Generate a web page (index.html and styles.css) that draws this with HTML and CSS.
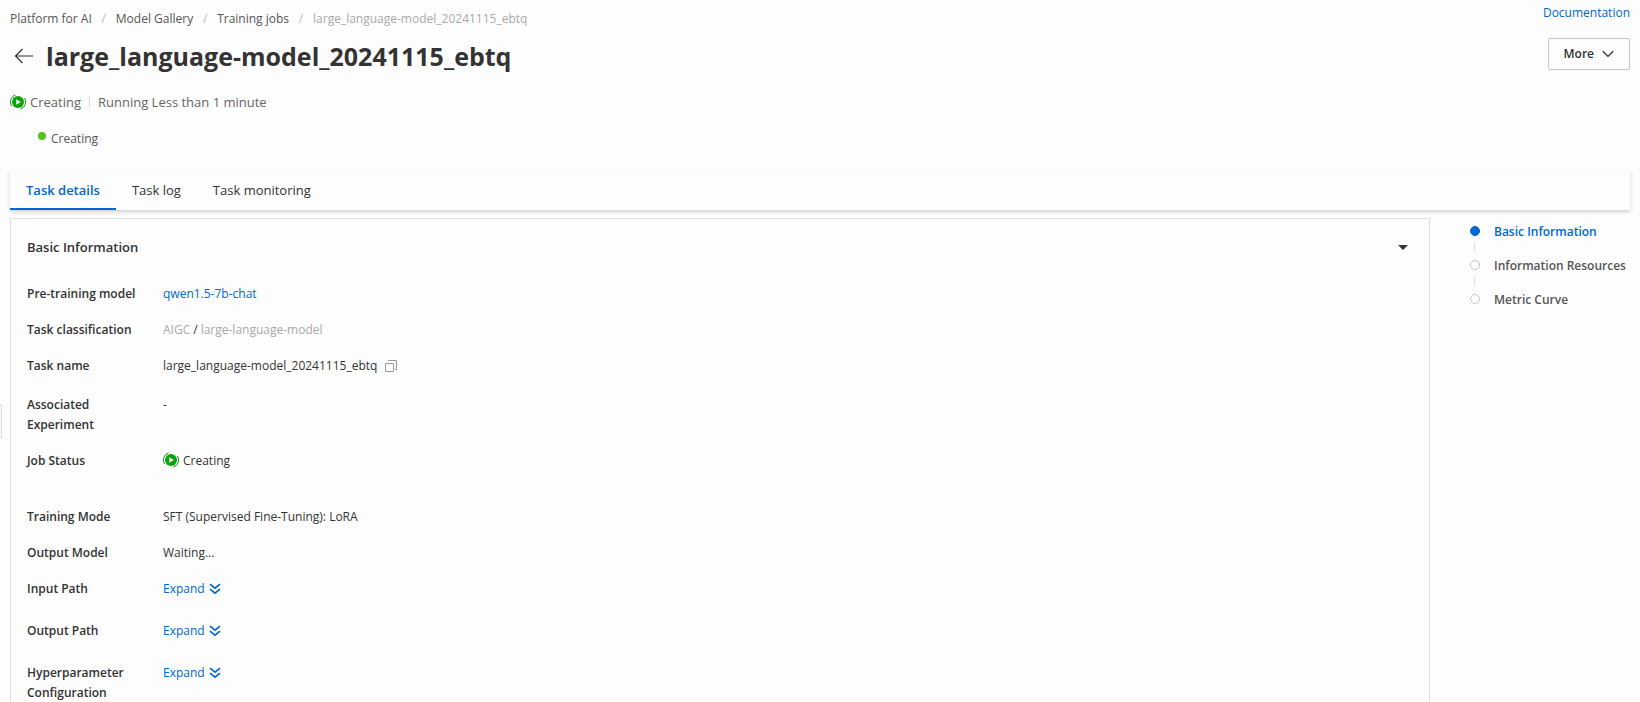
FILE: index.html
```html
<!DOCTYPE html>
<html lang="en">
<head>
<meta charset="utf-8">
<meta name="viewport" content="width=device-width, initial-scale=1">
<title>large_language-model_20241115_ebtq</title>
<link rel="stylesheet" href="styles.css">
</head>
<body>
<svg class="sprite" aria-hidden="true">
  <symbol id="running" viewBox="0 0 16 16">
    <circle cx="8" cy="8" r="6" fill="#0aa30a"/>
    <path d="M5.500 .9A7.500 7.500 0 0 0 1.500 12M10.500 15.100A7.500 7.500 0 0 0 14.500 4" fill="none" stroke="#0aa30a" stroke-width="1"/>
    <path d="M6.3 5.2v5.6l4.5-2.8z" fill="#fff"/>
  </symbol>
  <symbol id="expand" viewBox="0 0 12 12">
    <path d="M1 1.200l5 4 5-4M1 6.200l5 4 5-4" fill="none" stroke="currentColor" stroke-width="1.700"/>
  </symbol>
</svg>
<button class="side-handle" type="button" aria-label="Open sidebar"></button>
<div class="page">
  <header class="top">
    <div class="top-main">
      <nav class="crumbs" aria-label="Breadcrumb">
        <a href="#">Platform for AI</a><span class="sep">/</span>
        <a href="#">Model Gallery</a><span class="sep">/</span>
        <a href="#">Training jobs</a><span class="sep">/</span>
        <span class="current">large_language-model_20241115_ebtq</span>
      </nav>
      <div class="heading">
        <button class="back" type="button" aria-label="Back">
          <svg width="20" height="16" viewBox="0 0 20 16"><path d="M19 8H1.5M8.500 1L1.500 8l7 7" fill="none" stroke="#333" stroke-width="1.2"/></svg>
        </button>
        <h1>large_language-model_20241115_ebtq</h1>
      </div>
    </div>
    <div class="top-side">
      <a class="doc" href="#">Documentation</a>
      <button class="more" type="button">More
        <svg width="12" height="8" viewBox="0 0 12 8"><path d="M.8 1.200L6 6.400l5.200-5.200" fill="none" stroke="#333" stroke-width="1.3"/></svg>
      </button>
    </div>
  </header>
  <div class="status">
    <svg class="run"><use href="#running"/></svg>
    <span>Creating</span><span class="bar"></span><span>Running Less than 1 minute</span>
  </div>
  <div class="step"><span class="dot"></span>Creating</div>
  <div class="tabs" role="tablist">
    <button class="tab active" type="button" role="tab" aria-selected="true">Task details</button>
    <button class="tab" type="button" role="tab" aria-selected="false">Task log</button>
    <button class="tab" type="button" role="tab" aria-selected="false">Task monitoring</button>
  </div>
  <div class="content">
    <section class="panel">
      <div class="panel-head">
        <h2>Basic Information</h2>
        <button class="fold" type="button" aria-label="Collapse section">
          <svg width="10" height="5" viewBox="0 0 10 5"><path d="M0 0h10L5 5z" fill="#333"/></svg>
        </button>
      </div>
      <dl class="info">
        <div class="row"><dt>Pre-training model</dt><dd><a href="#">qwen1.5-7b-chat</a></dd></div>
        <div class="row"><dt>Task classification</dt><dd class="types"><span class="muted">AIGC</span><span>/</span><span class="muted">large-language-model</span></dd></div>
        <div class="row"><dt>Task name</dt><dd>large_language-model_20241115_ebtq
          <button class="copy" type="button" aria-label="Copy task name"><svg width="12" height="12" viewBox="0 0 12 12"><path d="M.5 3.500h8v8h-8zM3 .5h8.500V9.500H10" fill="none" stroke="#999"/></svg></button></dd></div>
        <div class="row experiment"><dt>Associated Experiment</dt><dd>-</dd></div>
        <div class="row job"><dt>Job Status</dt><dd><svg class="run"><use href="#running"/></svg>Creating</dd></div>
        <div class="row"><dt>Training Mode</dt><dd>SFT (Supervised Fine-Tuning): LoRA</dd></div>
        <div class="row"><dt>Output Model</dt><dd>Waiting...</dd></div>
        <div class="row"><dt>Input Path</dt><dd><button class="expand" type="button">Expand<svg><use href="#expand"/></svg></button></dd></div>
        <div class="row path"><dt>Output Path</dt><dd><button class="expand" type="button">Expand<svg><use href="#expand"/></svg></button></dd></div>
        <div class="row path"><dt>Hyperparameter Configuration</dt><dd><button class="expand" type="button">Expand<svg><use href="#expand"/></svg></button></dd></div>
      </dl>
    </section>
    <nav class="anchors" aria-label="Sections">
      <a class="on" href="#">Basic Information</a>
      <a href="#">Information Resources</a>
      <a href="#">Metric Curve</a>
    </nav>
  </div>
</div>
</body>
</html>
```
FILE: styles.css
```css
* { box-sizing: border-box; }
html { height: 100%; overflow: hidden; }
body {
  margin: 0;
  height: 100%;
  overflow: hidden;
  background: #fdfdfd;
  color: #333;
  font: 12px/20px "Segoe UI", "Open Sans", "Noto Sans", sans-serif;
}
button { margin: 0; padding: 0; border: 0; background: none; color: inherit; font: inherit; cursor: pointer; }
a { color: #0068d0; text-decoration: none; }
h1, h2, dl, dd { margin: 0; }
svg { display: block; flex: none; }
.sprite { position: absolute; width: 0; height: 0; }
.side-handle {
  position: absolute;
  left: 0;
  top: 404px;
  width: 2px;
  height: 34px;
  border: 1px solid #ddd;
  border-left: 0;
}
.page { padding: 0 10px; }

.top { display: flex; justify-content: space-between; }
.top-main { padding-top: 9px; }
.crumbs { display: flex; color: #555; }
.crumbs a { color: #555; }
.crumbs .sep { width: 24px; text-align: center; color: #bbb; }
.crumbs .current { color: #aaa; }
.heading { display: flex; align-items: center; gap: 12px; margin-top: 7px; padding-left: 4px; }
h1 { font-size: 25px; line-height: 40px; font-weight: 700; }
.top-side { display: flex; flex-direction: column; align-items: flex-end; gap: 15px; padding-top: 3px; }
.more {
  display: flex;
  align-items: center;
  gap: 8px;
  height: 32px;
  padding: 0 15px;
  border: 1px solid #c6c6c6;
  border-radius: 2px;
  font-weight: 600;
  font-size: 12px;
}

.status { display: flex; align-items: center; margin-top: 16px; font-size: 13px; color: #666; }
.run { width: 16px; height: 16px; margin-right: 4px; }
.bar { width: 1px; height: 12px; margin: 0 8px; background: #ddd; }
.step { display: flex; align-items: center; gap: 5px; margin: 17px 0 0 28px; color: #555; }
.dot { width: 8px; height: 8px; margin-bottom: 6px; border-radius: 50%; background: #52c41a; }

.tabs { display: flex; height: 40px; margin-top: 21px; box-shadow: 0 2px 4px rgba(0, 0, 0, .18); }
.tab { padding: 2px 16px 0; border-bottom: 2px solid transparent; font-size: 13px; }
.tab.active { border-color: #0068d0; color: #0068d0; font-weight: 600; }

.content { display: flex; align-items: flex-start; gap: 40px; margin-top: 8px; }
.panel { flex: 1; min-width: 0; padding: 18px 16px 24px; border: 1px solid #e0e0e0; }
.panel-head { display: flex; justify-content: space-between; align-items: center; }
h2 { font-size: 13px; line-height: 20px; font-weight: 600; }
.fold { padding: 4px 5px; }
.info { display: flex; flex-direction: column; gap: 16px; margin-top: 27px; }
.row { display: grid; grid-template-columns: 116px 1fr; gap: 20px; }
dt { font-weight: 600; }
dd { display: flex; align-items: flex-start; }
dd .run { margin-top: 1px; }
.types { gap: 3px; }
.muted { color: #aaa; }
.copy { padding: 4px 8px; }
.experiment { margin-top: 3px; }
.job { margin-bottom: 20px; }
.path { margin-top: 6px; }
.expand { display: flex; align-items: center; gap: 4px; color: #0068d0; }
.expand svg { width: 12px; height: 12px; }

.anchors { display: flex; flex-direction: column; gap: 14px; width: 160px; padding-top: 4px; font-weight: 600; }
.anchors a { position: relative; padding-left: 24px; color: #555; white-space: nowrap; }
.anchors a::before {
  content: "";
  position: absolute;
  left: 0;
  top: 4px;
  width: 8px;
  height: 8px;
  border: 1px solid #c0c4cc;
  border-radius: 50%;
}
.anchors a + a::after {
  content: "";
  position: absolute;
  left: 4px;
  top: -14px;
  width: 1px;
  height: 10px;
  background: #ddd;
}
.anchors .on { color: #0068d0; }
.anchors .on::before { border-color: #0068d0; background: #0068d0; }
```
